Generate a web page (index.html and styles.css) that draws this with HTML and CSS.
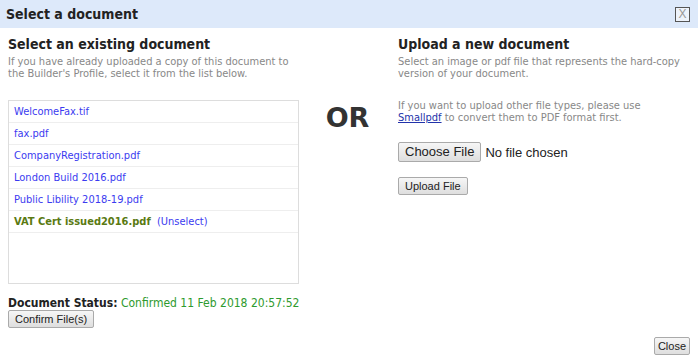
FILE: index.html
```html
<!DOCTYPE html>
<html lang="en">
<head>
  <meta charset="UTF-8">
  <title>Select a document</title>
  <link rel="stylesheet" href="styles.css">
</head>
<body>
  <div class="dialog">
    <div class="dialog-title">
      <span>Select a document</span>
      <button class="x-btn" type="button">X</button>
    </div>
    <div class="dialog-body">
      <div class="col-left">
        <h2>Select an existing document</h2>
        <p class="hint">If you have already uploaded a copy of this document to the Builder's Profile, select it from the list below.</p>
        <ul class="doc-list">
          <li><a href="#">WelcomeFax.tif</a></li>
          <li><a href="#">fax.pdf</a></li>
          <li><a href="#">CompanyRegistration.pdf</a></li>
          <li><a href="#">London Build 2016.pdf</a></li>
          <li><a href="#">Public Libility 2018-19.pdf</a></li>
          <li class="selected"><span>VAT Cert issued2016.pdf</span> <a href="#">(Unselect)</a></li>
        </ul>
        <div class="status"><b>Document Status:</b> <span class="ok">Confirmed 11 Feb 2018 20:57:52</span></div>
        <button class="btn btn-block" type="button">Confirm File(s)</button>
      </div>
      <div class="col-or">OR</div>
      <div class="col-right">
        <h2>Upload a new document</h2>
        <p class="hint">Select an image or pdf file that represents the hard-copy version of your document.</p>
        <p class="hint more">If you want to upload other file types, please use <a href="#">Smallpdf</a> to convert them to PDF format first.</p>
        <div class="file-row">
          <button class="btn btn-big" type="button">Choose File</button>
          <span>No file chosen</span>
        </div>
        <button class="btn" type="button">Upload File</button>
      </div>
    </div>
    <div class="dialog-foot">
      <button class="btn btn-close" type="button">Close</button>
    </div>
  </div>
</body>
</html>
```

FILE: styles.css
```css
body { margin: 0; font-family: "DejaVu Sans Condensed", "DejaVu Sans", Verdana, sans-serif; font-stretch: condensed; background: #fff; color: #222; }
.dialog { width: 698px; height: 364px; display: flex; flex-direction: column; }
.dialog-title { flex: none; height: 28px; background: #dde9fa; display: flex; align-items: center; justify-content: space-between; padding: 0 8px 0 6px; font-size: 14px; font-weight: bold; color: #222; }
.x-btn { width: 15px; height: 15px; padding: 0; border: 1px solid #555; background: #eef3fb; color: #999; font-family: "Liberation Sans", Arial, sans-serif; font-size: 12px; line-height: 12px; }
.dialog-body { display: flex; padding: 0 8px; flex: 1; }
.col-left { width: 291px; }
.col-or { width: 99px; text-align: center; font-family: "DejaVu Sans", Verdana, sans-serif; font-stretch: normal; font-size: 27px; font-weight: bold; color: #333; padding-top: 74px; padding-right: 2px; box-sizing: border-box; }
.col-right { flex: 1; }
h2 { font-size: 14px; line-height: 18px; margin: 7px 0 3px; color: #222; }
.hint { font-size: 11px; line-height: 12px; color: #888; margin: 0; }
.hint.more { margin-top: 20px; max-width: 262px; }
.hint a { color: #2233aa; }
.doc-list { list-style: none; margin: 20px 0 0; padding: 0; border: 1px solid #ddd; height: 182px; }
.doc-list li { height: 21px; line-height: 22px; border-bottom: 1px solid #eee; padding-left: 5px; font-size: 11px; }
.doc-list a { color: #3b3bf0; text-decoration: none; }
.doc-list .selected span { color: #5a7a12; font-weight: bold; margin-right: 3px; }
.status { margin-top: 12px; font-size: 12px; line-height: 14px; white-space: nowrap; }
.status .ok { color: #2e9a2e; }
.btn { font-family: "Liberation Sans", Arial, sans-serif; font-stretch: normal; font-size: 11px; color: #222; background: linear-gradient(#f6f6f6, #dedede); border: 1px solid #aaa; border-radius: 2px; padding: 1px 6px; height: 18px; line-height: 14px; }
.btn-block { display: block; }
.btn-close { padding: 1px 3px; }
.file-row { display: flex; align-items: center; gap: 4px; margin: 18px 0 13px; font-family: "Liberation Sans", Arial, sans-serif; font-stretch: normal; font-size: 13px; }
.btn-big { font-size: 13px; height: 20px; line-height: 16px; padding: 1px 6px; }
.dialog-foot { flex: none; display: flex; justify-content: flex-end; padding: 0 8px 9px; }
```
